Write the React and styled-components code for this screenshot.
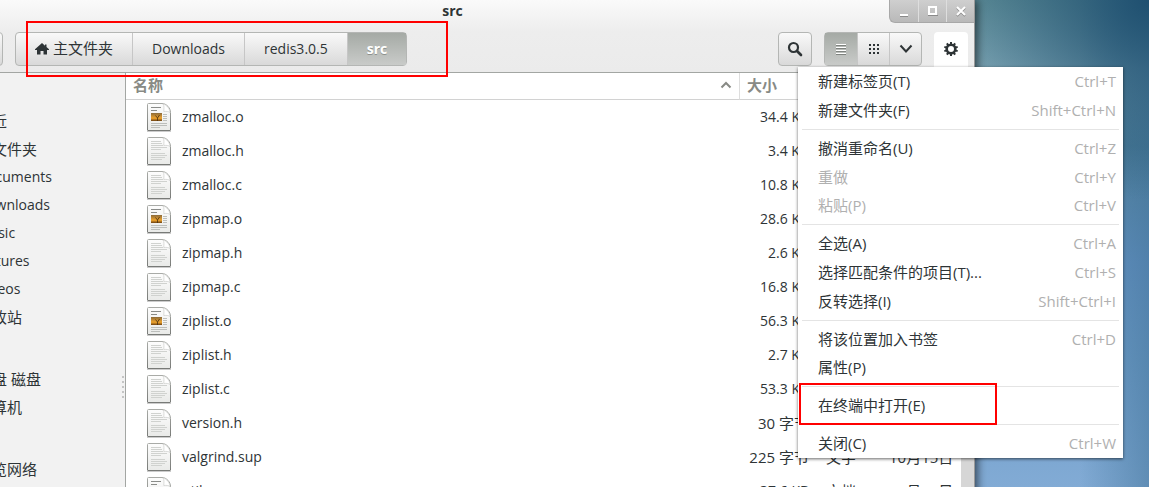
import React from 'react';
import styled, { createGlobalStyle } from 'styled-components';

const GlobalStyle = createGlobalStyle`
  * {
    box-sizing: border-box;
  }

  body {
    margin: 0;
    overflow: hidden;
    color: #2e3436;
    font-family: 'Open Sans', 'Noto Sans CJK SC', sans-serif;
    font-size: 14px;
  }

  button {
    font: inherit;
    color: inherit;
  }
`;

const Desktop = styled.div`
  height: 100vh;
  padding-right: 174px;
  overflow: hidden;
  background:
    radial-gradient(circle at 100% 0, #1f5070 0, rgba(31, 80, 112, 0) 200px),
    linear-gradient(90deg, rgba(62, 112, 150, 0) 94%, rgba(62, 112, 150, 0.5)),
    linear-gradient(180deg, #5f8e98 0, #7ea6b5 14%, #52829b 30%, #6593c3 54%, #6f9dc8 74%, #82abd5 100%);
`;

/* the window hangs off the left and bottom edges of the screen */
const Window = styled.div`
  display: flex;
  flex-direction: column;
  height: calc(100vh + 214px);
  margin-left: -69px;
  background: #fff;
  border-right: 1px solid #9a9a9a;
  box-shadow: 2px 0 9px rgba(0, 0, 0, 0.65);
`;

const Header = styled.header`
  border-bottom: 1px solid #a3a6a3;
  background: linear-gradient(#fafafa 0, #ededed 32px, #ebebeb);
`;

const TitleBar = styled.div`
  display: grid;
  grid-template-columns: 1fr auto 1fr;
  height: 22px;
`;

const Title = styled.h1`
  grid-column: 2;
  margin: 0;
  font-size: 14px;
  line-height: 22px;
`;

const WindowButtons = styled.div`
  display: flex;
  justify-self: end;
  height: 23px;
  border: 1px solid #a8a8a8;
  border-width: 0 0 1px 1px;
  border-radius: 0 0 0 6px;
  background: linear-gradient(#cfcfcf, #b9b9b9);
`;

const WindowButton = styled.button`
  width: 28px;
  padding: 0;
  border: 0;
  border-left: 1px solid #dedede;
  background: none;
  line-height: 0;

  &:first-child {
    border-left: 0;
  }
`;

const Toolbar = styled.div`
  display: flex;
  gap: 12px;
  padding: 10px 6px 6px 0;
`;

/* history buttons, mostly past the left edge of the screen */
const HistoryGroup = styled.div`
  width: 66px;
  height: 34px;
  margin-left: 6px;
  border: 1px solid #b4b6b4;
  border-radius: 4px;
  background: linear-gradient(#f9f9f9, #d9d9d9);
`;

const ButtonGroup = styled.div`
  position: relative;
  display: flex;
  height: 34px;
  margin-right: ${(props) => (props.$grow ? 'auto' : 0)};
  border: 1px solid #b4b6b4;
  border-radius: 4px;
  background: linear-gradient(#f9f9f9, #d9d9d9);
`;

const ToolButton = styled.button`
  display: flex;
  align-items: center;
  justify-content: center;
  gap: 4px;
  min-width: 32px;
  padding: 0 ${(props) => (props.$wide ? '19px' : '0')};
  border: 0;
  border-left: 1px solid #c6c6c6;
  background: ${(props) => (props.$active ? 'linear-gradient(#a5aaa5, #c9cbc9)' : 'none')};
  color: ${(props) => (props.$active ? '#fff' : '#2e3436')};
  font-weight: ${(props) => (props.$active ? 700 : 400)};
  line-height: 20px;
  text-shadow: ${(props) => (props.$active ? '0 1px #8c908c' : 'none')};

  &:first-child {
    border-left: 0;
  }
`;

const HomeLabel = styled.span`
  font-size: 15px;
  padding-bottom: 2px;
`;

const GearWrap = styled.div`
  position: relative;
`;

const GearButton = styled.button`
  display: flex;
  align-items: center;
  justify-content: center;
  width: 34px;
  height: 36px;
  padding: 0 0 2px;
  border: 0;
  border-radius: 4px 4px 0 0;
  margin-bottom: -2px;
  background: #fff;
`;

const Menu = styled.div`
  position: absolute;
  top: 35px;
  right: -155px;
  z-index: 1;
  width: 325px;
  background: #fff;
  box-shadow: 0 1px 3px rgba(0, 0, 0, 0.6);
`;

const MenuItem = styled.button`
  display: flex;
  align-items: center;
  justify-content: space-between;
  width: 100%;
  height: ${(props) => (props.$short ? 28 : 29)}px;
  padding: 0 7px 1px 20px;
  border: 0;
  background: none;
  font-size: 15px;
  line-height: 20px;
  white-space: nowrap;

  &:disabled {
    color: #b0b0b0;
  }
`;

const Shortcut = styled.kbd`
  color: #b0b0b0;
  font-family: inherit;
  font-size: 15px;
`;

const Separator = styled.hr`
  height: 1px;
  margin: 4px;
  border: 0;
  background: #e4e4e4;
`;

const Highlight = styled.div`
  position: absolute;
  top: ${(props) => props.$top}px;
  left: ${(props) => props.$left}px;
  width: ${(props) => props.$width}px;
  height: ${(props) => props.$height}px;
  border: 2px solid #f00;
  pointer-events: none;
`;

const Body = styled.div`
  display: flex;
  flex: 1;
  min-height: 0;
  overflow: hidden;
`;

const Sidebar = styled.nav`
  display: flex;
  align-items: center;
  justify-content: space-between;
  width: 195px;
  padding-right: 1px;
  border-right: 1px solid #a3a6a3;
  background: #f2f2f2;
`;

const Places = styled.div`
  align-self: flex-start;
`;

const PlaceGroup = styled.ul`
  margin: 0;
  padding: 34px 0 0 46px;
  list-style: none;
`;

const Place = styled.a`
  display: block;
  color: inherit;
  font-size: ${(props) => (props.$latin ? 14 : 15)}px;
  line-height: 28px;
  text-decoration: none;
  white-space: nowrap;
`;

const Files = styled.main`
  display: flex;
  flex: 1;
  align-items: flex-start;
  min-width: 0;
`;

const FileTable = styled.table`
  flex: 1;
  width: 100%;
  border-collapse: separate;
  border-spacing: 0;
  table-layout: fixed;
`;

const HeadCell = styled.th`
  width: ${(props) => props.$width || 'auto'};
  height: 27px;
  padding: 0 7px 2px;
  border-bottom: 1px solid #d2d2d2;
  border-left: ${(props) => (props.$width ? '1px solid #dedede' : '0')};
  color: #888a85;
  font-size: 15px;
  line-height: 20px;
  text-align: left;
`;

const HeadLabel = styled.span`
  display: flex;
  align-items: center;
  justify-content: space-between;
`;

const Cell = styled.td`
  height: 34px;
  padding: 0 9px 0 8px;
  font-size: ${(props) => (props.$small ? 14 : 15)}px;
  line-height: 20px;
  text-align: ${(props) => props.$align || 'left'};
  white-space: nowrap;
`;

const FileName = styled.div`
  display: flex;
  align-items: center;
  gap: 10px;
  padding-left: 12px;
`;

const Scrollbar = styled.div`
  align-self: stretch;
  width: 13px;
  background: #d6d6d6;
`;

const path = ['Downloads', 'redis3.0.5'];

const menu = [
  [
    { label: '新建标签页(T)', keys: 'Ctrl+T' },
    { label: '新建文件夹(F)', keys: 'Shift+Ctrl+N' },
  ],
  [
    { label: '撤消重命名(U)', keys: 'Ctrl+Z' },
    { label: '重做', keys: 'Ctrl+Y', disabled: true, short: true },
    { label: '粘贴(P)', keys: 'Ctrl+V', disabled: true },
  ],
  [
    { label: '全选(A)', keys: 'Ctrl+A' },
    { label: '选择匹配条件的项目(T)...', keys: 'Ctrl+S' },
    { label: '反转选择(I)', keys: 'Shift+Ctrl+I' },
  ],
  [
    { label: '将该位置加入书签', keys: 'Ctrl+D', short: true },
    { label: '属性(P)' },
  ],
  [{ label: '在终端中打开(E)' }],
  [{ label: '关闭(C)', keys: 'Ctrl+W' }],
];

const places = [
  ['最近', '主文件夹', 'Documents', 'Downloads', 'Music', 'Pictures', 'Videos', '回收站'],
  ['软盘 磁盘', '计算机'],
  ['浏览网络'],
];

const files = [
  { name: 'zmalloc.o', size: '34.4 KB' },
  { name: 'zmalloc.h', size: '3.4 KB' },
  { name: 'zmalloc.c', size: '10.8 KB' },
  { name: 'zipmap.o', size: '28.6 KB' },
  { name: 'zipmap.h', size: '2.6 KB' },
  { name: 'zipmap.c', size: '16.8 KB' },
  { name: 'ziplist.o', size: '56.3 KB' },
  { name: 'ziplist.h', size: '2.7 KB' },
  { name: 'ziplist.c', size: '53.3 KB' },
  { name: 'version.h', size: '30 字节' },
  { name: 'valgrind.sup', size: '225 字节', type: '文字', date: '10月15日' },
  { name: 'util.o', size: '37.6 KB', type: '文档', date: '10月20日' },
];

function FileIcon({ picture }) {
  return (
    <svg width="26" height="30" viewBox="0 0 26 30" aria-hidden="true">
      <defs>
        <linearGradient id="paper" x1="0" y1="0" x2="0" y2="1">
          <stop offset="0" stopColor="#fdfdfd" />
          <stop offset="1" stopColor="#e9eae8" />
        </linearGradient>
        <linearGradient id="edge" x1="0" y1="0" x2="0" y2="1">
          <stop offset="0" stopColor="#a9aba7" />
          <stop offset="1" stopColor="#787a77" />
        </linearGradient>
        <linearGradient id="sunset" x1="0" y1="0" x2="0" y2="1">
          <stop offset="0" stopColor="#8a6a3a" />
          <stop offset="0.65" stopColor="#f0a42c" />
          <stop offset="1" stopColor="#6b4012" />
        </linearGradient>
      </defs>
      <path d="M1 29.5h24" stroke="#000" strokeOpacity="0.2" />
      <path
        d="M2.5 1.5H16c4.500 0 8.500 4.500 8.500 9V28a.5.5 0 0 1-.5.5H2a.5.5 0 0 1-.5-.5V2.500a1 1 0 0 1 1-1z"
        fill="url(#paper)"
        stroke="url(#edge)"
      />
      {picture ? (
        <>
          <path d="M5 5.500h10M5 8.500h6" stroke="#8a8c89" />
          <path d="M17 12.500h4M17 14.500h4M17 16.500h4M17 18.500h4M5 21.500h16M5 23.500h16M5 25.500h9" stroke="#bcbebb" />
          <rect x="5" y="11" width="11" height="8" fill="url(#sunset)" />
          <path d="M11.500 19v-3l-2-2.500m2 2.500l2-3" stroke="#4a2e0c" strokeWidth="0.8" fill="none" />
        </>
      ) : (
        <path
          d="M5 5.500h10M5 7.500h11M5 9.500h12M5 11.500h16M5 13.500h10M5 17.500h14M5 19.500h16M5 21.500h14M5 23.500h11"
          stroke="#d0d2cf"
        />
      )}
      <path d="M17 2c1.500 1.500.8 5 .8 7.500 2.500-.2 5-.2 6.200 1C24 7 20.500 2.500 17 2z" fill="#fff" stroke="#c2c4c1" strokeWidth="0.6" />
    </svg>
  );
}

function HomeIcon() {
  return (
    <svg width="14" height="12" viewBox="0 0 14 12" fill="#2e3436" aria-hidden="true">
      <path d="M7 0L0 6.200V7h2v4.500h3.500V8h3v3.500H12V7h2v-.8L11.500 4V1.500H10v1.200z" />
    </svg>
  );
}

function SearchIcon() {
  return (
    <svg width="16" height="16" viewBox="0 0 16 16" fill="none" stroke="#2e3436" aria-hidden="true">
      <circle cx="6.500" cy="6.500" r="4.500" strokeWidth="2.200" />
      <path d="M10 10l4 4" strokeWidth="2.600" strokeLinecap="round" />
    </svg>
  );
}

function GearIcon() {
  const teeth = [0, 36, 72, 108, 144, 180, 216, 252, 288, 324];
  return (
    <svg width="16" height="16" viewBox="0 0 16 16" aria-hidden="true">
      <circle cx="8" cy="8" r="4.300" fill="none" stroke="#2e3436" strokeWidth="2.600" />
      {teeth.map((angle) => (
        <rect key={angle} x="7" y="1" width="2" height="2.500" fill="#2e3436" transform={`rotate(${angle} 8 8)`} />
      ))}
    </svg>
  );
}

function ListIcon() {
  return (
    <svg width="12" height="12" viewBox="0 0 12 12" shapeRendering="crispEdges" aria-hidden="true">
      <path d="M1 1.500h10M1 4.500h10M1 7.500h10M1 10.500h10" stroke="#fff" />
      <path d="M1 2.500h10M1 5.500h10M1 8.500h10M1 11.500h10" stroke="#7f837f" />
    </svg>
  );
}

function GridIcon() {
  return (
    <svg width="12" height="12" viewBox="0 0 12 12" aria-hidden="true">
      <path d="M1 2h10M1 6h10M1 10h10" stroke="#2e3436" strokeWidth="2" strokeDasharray="2 2" />
    </svg>
  );
}

function ChevronIcon() {
  return (
    <svg width="14" height="10" viewBox="0 0 14 10" aria-hidden="true">
      <path d="M1.500 1.500L7 7.500l5.500-6" fill="none" stroke="#2e3436" strokeWidth="2" />
    </svg>
  );
}

function PathBar() {
  return (
    <ButtonGroup $grow>
      <ToolButton $wide>
        <HomeIcon />
        <HomeLabel>主文件夹</HomeLabel>
      </ToolButton>
      {path.map((folder) => (
        <ToolButton key={folder} $wide>
          {folder}
        </ToolButton>
      ))}
      <ToolButton $wide $active>
        src
      </ToolButton>
      <Highlight $top={-12} $left={10} $width={422} $height={56} />
    </ButtonGroup>
  );
}

function GearMenu() {
  return (
    <GearWrap>
      <GearButton aria-label="选项" aria-haspopup="menu">
        <GearIcon />
      </GearButton>
      <Menu role="menu">
        {menu.map((group, i) => (
          <React.Fragment key={group[0].label}>
            {i > 0 && <Separator />}
            {group.map((item) => (
              <MenuItem key={item.label} role="menuitem" disabled={item.disabled} $short={item.short}>
                {item.label}
                {item.keys && <Shortcut>{item.keys}</Shortcut>}
              </MenuItem>
            ))}
          </React.Fragment>
        ))}
        <Highlight $top={316} $left={1} $width={198} $height={42} />
      </Menu>
    </GearWrap>
  );
}

function App() {
  return (
    <>
      <GlobalStyle />
      <Desktop>
        <Window>
          <Header>
            <TitleBar>
              <Title>src</Title>
              <WindowButtons>
                <WindowButton aria-label="最小化">
                  <svg width="12" height="12" viewBox="0 0 12 12">
                    <path d="M2 10h8" stroke="#fff" strokeWidth="2" />
                    <path d="M2 11.500h8" stroke="#8a8a8a" />
                  </svg>
                </WindowButton>
                <WindowButton aria-label="最大化">
                  <svg width="12" height="12" viewBox="0 0 12 12">
                    <path d="M1 10.500h10" stroke="#8a8a8a" />
                    <rect x="2" y="2" width="7" height="7" fill="none" stroke="#fff" strokeWidth="2" />
                  </svg>
                </WindowButton>
                <WindowButton aria-label="关闭">
                  <svg width="12" height="12" viewBox="0 0 12 12" fill="none">
                    <path d="M2 3l8 8M10 3l-8 8" stroke="#8a8a8a" strokeWidth="2" />
                    <path d="M2 2l8 8M10 2l-8 8" stroke="#fff" strokeWidth="2" />
                  </svg>
                </WindowButton>
              </WindowButtons>
            </TitleBar>
            <Toolbar>
              <HistoryGroup />
              <PathBar />
              <ButtonGroup>
                <ToolButton aria-label="搜索">
                  <SearchIcon />
                </ToolButton>
              </ButtonGroup>
              <ButtonGroup>
                <ToolButton $active aria-label="列表">
                  <ListIcon />
                </ToolButton>
                <ToolButton aria-label="图标">
                  <GridIcon />
                </ToolButton>
                <ToolButton aria-label="视图选项">
                  <ChevronIcon />
                </ToolButton>
              </ButtonGroup>
              <GearMenu />
            </Toolbar>
          </Header>
          <Body>
            <Sidebar>
              <Places>
                {places.map((group) => (
                  <PlaceGroup key={group[0]}>
                    {group.map((place) => (
                      <li key={place}>
                        <Place href="#" $latin={/^[A-Z]/.test(place)}>
                          {place}
                        </Place>
                      </li>
                    ))}
                  </PlaceGroup>
                ))}
              </Places>
              <svg width="2" height="24" viewBox="0 0 2 24" aria-hidden="true">
                <path d="M1 1v22" stroke="#c4c4c4" strokeWidth="2" strokeDasharray="2 3" />
              </svg>
            </Sidebar>
            <Files>
              <FileTable>
                <thead>
                  <tr>
                    <HeadCell>
                      <HeadLabel>
                        名称
                        <svg width="12" height="8" viewBox="0 0 12 8" aria-hidden="true">
                          <path d="M1.500 6.500L6 2l4.500 4.500" fill="none" stroke="#888a85" strokeWidth="2" />
                        </svg>
                      </HeadLabel>
                    </HeadCell>
                    <HeadCell $width="79px">大小</HeadCell>
                    <HeadCell $width="63px" aria-label="类型" />
                    <HeadCell $width="80px" aria-label="修改日期" />
                  </tr>
                </thead>
                <tbody>
                  {files.map((file) => (
                    <tr key={file.name}>
                      <Cell $small>
                        <FileName>
                          <FileIcon picture={file.name.endsWith('.o')} />
                          {file.name}
                        </FileName>
                      </Cell>
                      <Cell $small={file.size.endsWith('KB')} $align="right">
                        {file.size}
                      </Cell>
                      <Cell>{file.type}</Cell>
                      <Cell>{file.date}</Cell>
                    </tr>
                  ))}
                </tbody>
              </FileTable>
              <Scrollbar />
            </Files>
          </Body>
        </Window>
      </Desktop>
    </>
  );
}

export default App;
